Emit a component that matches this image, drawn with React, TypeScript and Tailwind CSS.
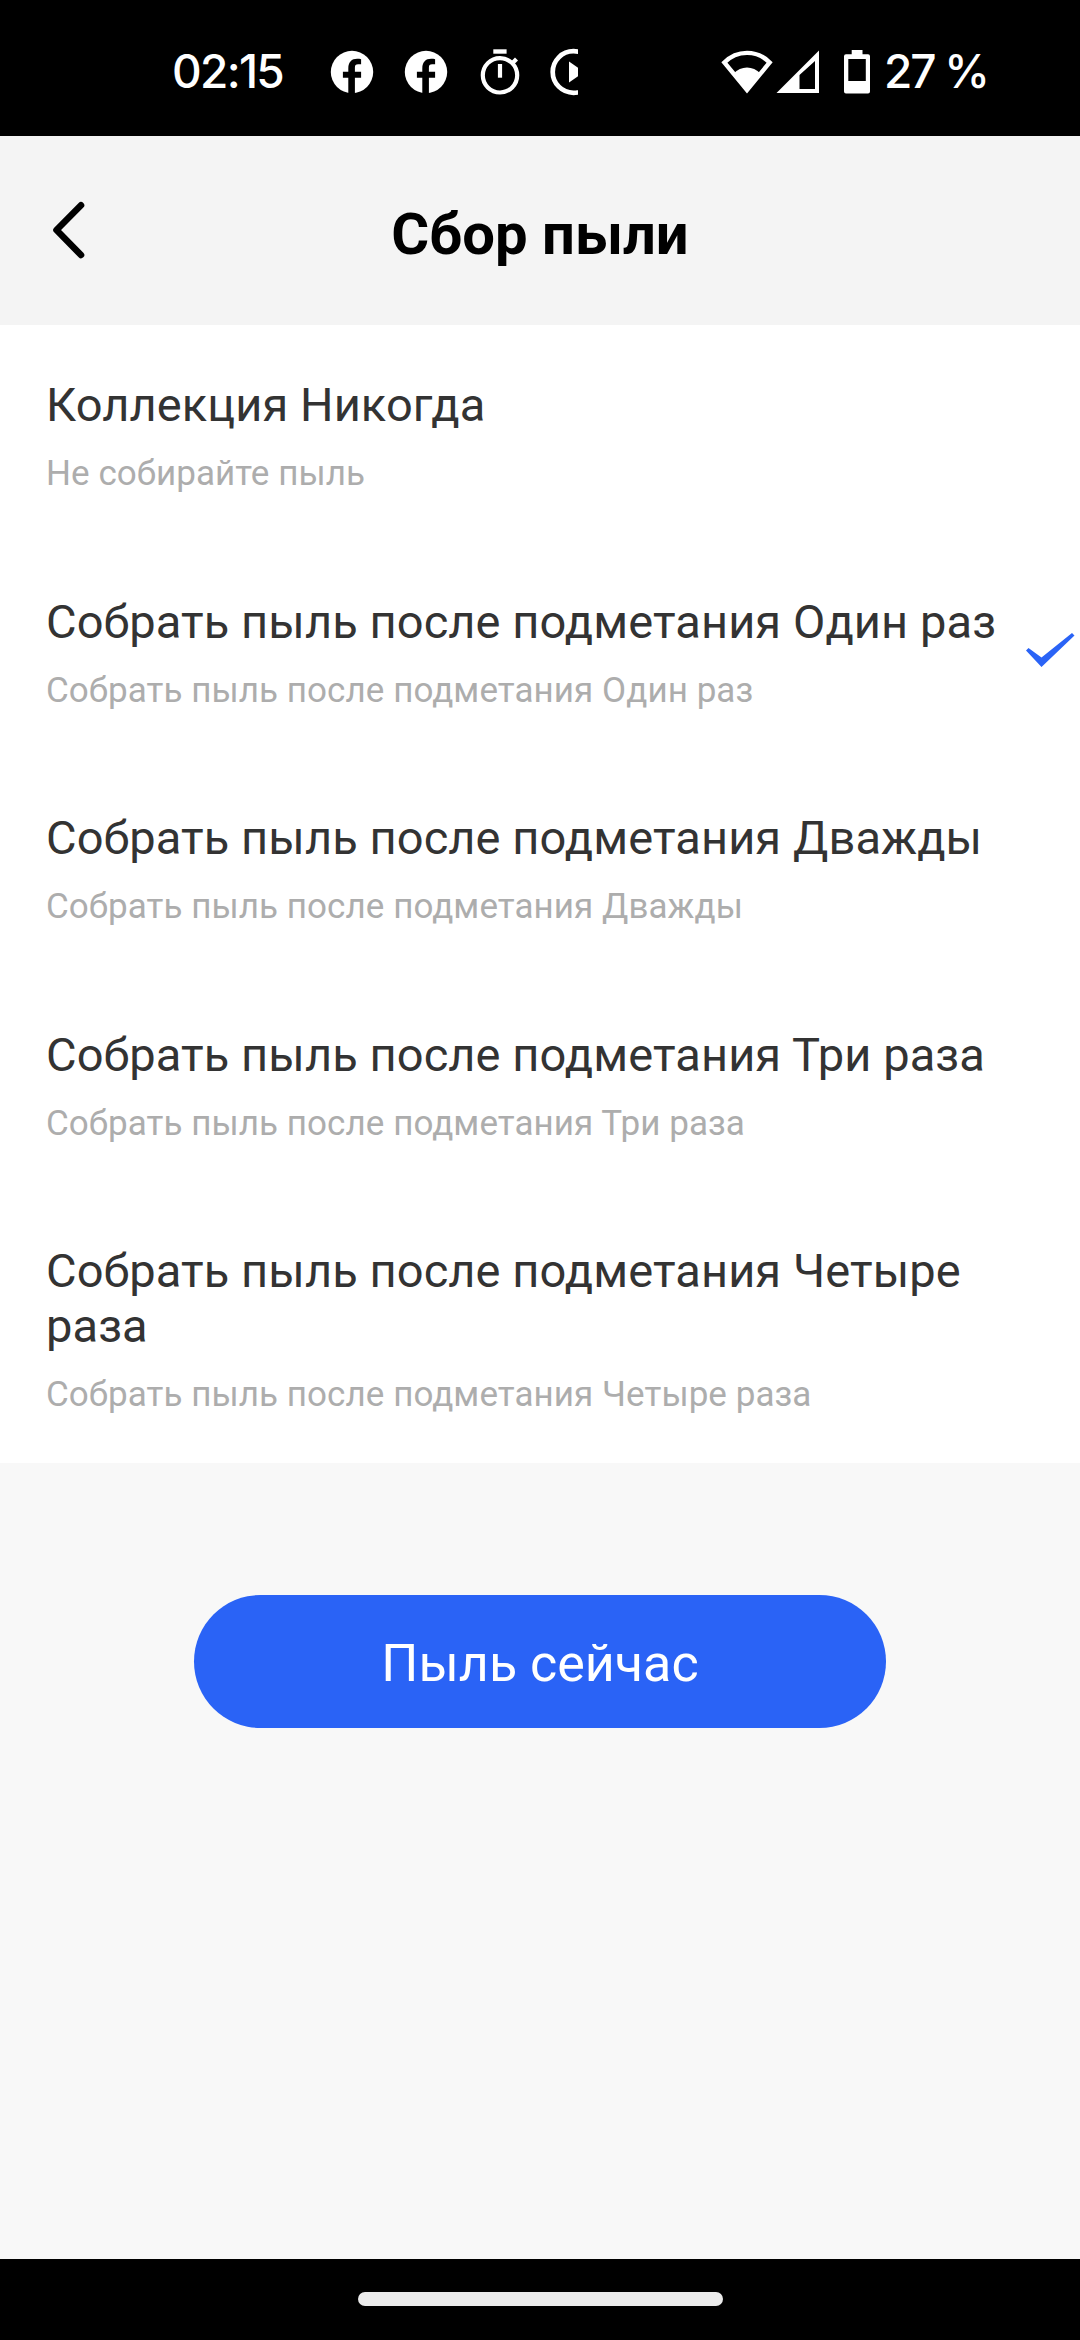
const options = [
  { title: "Коллекция Никогда", note: "Не собирайте пыль" },
  {
    title: "Собрать пыль после подметания Один раз",
    note: "Собрать пыль после подметания Один раз",
    selected: true,
  },
  {
    title: "Собрать пыль после подметания Дважды",
    note: "Собрать пыль после подметания Дважды",
  },
  {
    title: "Собрать пыль после подметания Три раза",
    note: "Собрать пыль после подметания Три раза",
  },
  {
    title: "Собрать пыль после подметания Четыре раза",
    note: "Собрать пыль после подметания Четыре раза",
  },
];

function FacebookIcon() {
  return (
    <svg className="h-[44px] w-[44px]" viewBox="0 0 44 44">
      <circle cx="22" cy="22" r="21.2" fill="#fff" />
      <path
        d="M18.3 44V27.7h-5.4v-6h5.4v-3.4c0-6.200 3.400-9.500 8.900-9.500 1.500 0 2.800.1 3.900.4v5.100h-3c-2.400 0-3.200 1.200-3.200 3.200v4.200h6.200v6h-6.200V44z"
        fill="#000"
      />
    </svg>
  );
}

function TimerIcon() {
  return (
    <svg className="h-[46px] w-[40px]" viewBox="0 0 40 46" fill="none" stroke="#fff">
      <circle cx="20" cy="26.300" r="17.200" strokeWidth="4.200" />
      <path d="M13.300 2.500h13.300" strokeWidth="4.400" />
      <path d="M20 15v13.700" strokeWidth="4.200" />
      <path d="M31.500 15l5-5" strokeWidth="4.200" />
    </svg>
  );
}

function PlayIcon() {
  return (
    <svg className="h-[48px] w-[28px]" viewBox="0 0 28 48">
      <circle cx="23.500" cy="24" r="20.800" fill="none" stroke="#fff" strokeWidth="4.700" />
      <path d="M19 13.500v21L34 24z" fill="#fff" />
    </svg>
  );
}

function WifiIcon() {
  return (
    <svg className="h-[44px] w-[52px]" viewBox="0 0 52 44">
      <path d="M3.300 12.500C16-.4 36-.4 48.700 12.500L26 40z" fill="none" stroke="#fff" strokeWidth="4.400" />
      <path d="M12.500 23.500C20 15.500 32 15.500 39.500 23.500L26 42z" fill="#fff" />
    </svg>
  );
}

function SignalIcon() {
  return (
    <svg className="h-[44px] w-[44px]" viewBox="0 0 44 44">
      <path fillRule="evenodd" d="M.5 43L43 .5V43zM23.500 25v14H39V11z" fill="#fff" />
    </svg>
  );
}

function BatteryIcon() {
  return (
    <svg className="h-[44px] w-[26px]" viewBox="0 0 26 44">
      <path
        fillRule="evenodd"
        d="M7.700 0h10.800v4.300H24a2 2 0 0 1 2 2V41.500a2 2 0 0 1-2 2H2a2 2 0 0 1-2-2V6.300a2 2 0 0 1 2-2h5.700zM4.300 9v22h17.500V9z"
        fill="#fff"
      />
    </svg>
  );
}

export default function App() {
  return (
    <div className="flex h-[2340px] w-[1080px] flex-col overflow-hidden bg-[#f8f8f8] font-[Roboto,sans-serif]">
      <div className="flex h-[136px] items-center bg-black pt-[7px] pl-[172px] text-white">
        <span className="w-[158px] pb-[2px] font-[Inter,sans-serif] text-[46px] leading-[56px] font-medium tracking-[-1.700px] whitespace-nowrap">
          02:15
        </span>
        <div className="flex items-center">
          <FacebookIcon />
          <div className="ml-[30px]"><FacebookIcon /></div>
          <div className="ml-[32px]"><TimerIcon /></div>
          <div className="ml-[30px]"><PlayIcon /></div>
        </div>
        <div className="ml-[143px] flex items-center">
          <WifiIcon />
          <div className="ml-[3px]"><SignalIcon /></div>
          <div className="ml-[24px]"><BatteryIcon /></div>
          <span className="ml-[14px] pb-[2px] font-[Inter,sans-serif] text-[46px] leading-[56px] font-medium tracking-[-2.200px] whitespace-nowrap">
            27 %
          </span>
        </div>
      </div>

      <header className="grid h-[189px] grid-cols-[120px_1fr_120px] items-center bg-[#f4f4f4]">
        <button aria-label="Назад" className="pb-[2px] pl-[50px]">
          <svg className="h-[60px] w-[40px]" viewBox="0 0 40 60">
            <path
              d="M31 5.300L6.500 30 31 55"
              fill="none"
              stroke="#000"
              strokeWidth="6.600"
              strokeLinecap="round"
              strokeLinejoin="round"
            />
          </svg>
        </button>
        <h1 className="pt-[6px] text-center text-[58px] leading-[68px] font-bold text-black">Сбор пыли</h1>
      </header>

      <ul className="bg-white">
        {options.map((option) => (
          <li key={option.title} className="flex items-center pt-[52px] pb-[47.500px]">
            <div className="w-[1005px] shrink-0 pl-[46px]">
              <div className="text-[47px] leading-[55px] tracking-[0.090px] text-[#333]">{option.title}</div>
              <div className="mt-[21px] text-[35px] leading-[41px] tracking-[0.060px] text-[#adadad]">
                {option.note}
              </div>
            </div>
            {option.selected && (
              <svg className="mb-[4px] ml-[21px] h-[36px] w-[50px]" viewBox="0 0 50 36">
                <path d="M0 18.500L2.500 16 15.500 25.500 46 1 48.500 3.500 15.500 35z" fill="#2a63f6" />
              </svg>
            )}
          </li>
        ))}
      </ul>

      <button className="mt-[132px] h-[133px] w-[692px] self-center rounded-full bg-[#2a63f6] pt-[5px] text-[52px] leading-[61px] text-white">
        Пыль сейчас
      </button>

      <div className="mt-auto flex h-[81px] justify-center bg-black pt-[33px]">
        <div className="h-[14px] w-[365px] rounded-full bg-[#ebebeb]" />
      </div>
    </div>
  );
}
